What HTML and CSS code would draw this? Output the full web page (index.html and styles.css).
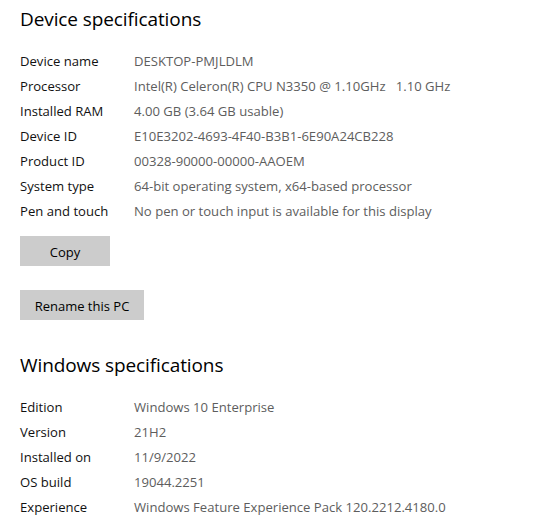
FILE: index.html
```html
<!DOCTYPE html>
<html>
<head>
<meta charset="utf-8">
<link rel="stylesheet" href="styles.css">
</head>
<body>
<div class="page">
  <section class="section">
    <h2 class="title title-device">Device specifications</h2>
    <div class="specs">
      <div class="label">Device name</div><div class="value">DESKTOP-PMJLDLM</div>
      <div class="label">Processor</div><div class="value">Intel(R) Celeron(R) CPU N3350 @ 1.10GHz&nbsp;&nbsp; 1.10 GHz</div>
      <div class="label">Installed RAM</div><div class="value">4.00 GB (3.64 GB usable)</div>
      <div class="label">Device ID</div><div class="value">E10E3202-4693-4F40-B3B1-6E90A24CB228</div>
      <div class="label">Product ID</div><div class="value">00328-90000-00000-AAOEM</div>
      <div class="label">System type</div><div class="value">64-bit operating system, x64-based processor</div>
      <div class="label">Pen and touch</div><div class="value">No pen or touch input is available for this display</div>
    </div>
    <div class="actions">
      <button class="btn btn-copy">Copy</button>
      <button class="btn btn-rename">Rename this PC</button>
    </div>
  </section>
  <section class="section section-win">
    <h2 class="title">Windows specifications</h2>
    <div class="specs specs-win">
      <div class="label">Edition</div><div class="value">Windows 10 Enterprise</div>
      <div class="label">Version</div><div class="value">21H2</div>
      <div class="label">Installed on</div><div class="value">11/9/2022</div>
      <div class="label">OS build</div><div class="value">19044.2251</div>
      <div class="label">Experience</div><div class="value">Windows Feature Experience Pack 120.2212.4180.0</div>
    </div>
  </section>
</div>
</body>
</html>
```
FILE: styles.css
```css
html, body {
  margin: 0;
  padding: 0;
  background: #ffffff;
}
.page {
  padding: 5px 0 0 20px;
  font-family: "Open Sans", "Noto Sans", sans-serif;
  color: #000;
}
.title {
  margin: 0 0 16px 0;
  font-size: 19px;
  font-weight: 400;
  line-height: 28px;
  letter-spacing: -0.1px;
  color: #000;
}
.title-device {
  margin-bottom: 15px;
}
.section-win {
  margin-top: 31px;
}
.specs {
  display: grid;
  grid-template-columns: 114px 1fr;
  grid-auto-rows: 25px;
  align-items: center;
  font-size: 13.1px;
}
.specs-win {
  grid-auto-rows: 24.8px;
}
.label {
  color: #111;
}
.value {
  color: #5d5d5d;
  white-space: nowrap;
}
.actions {
  display: flex;
  flex-direction: column;
  align-items: flex-start;
  gap: 24px;
  margin-top: 13px;
}
.btn {
  height: 30px;
  border: none;
  background: #cccccc;
  font-family: "Open Sans", "Noto Sans", sans-serif;
  font-size: 13px;
  color: #000;
  padding: 0 0 0 0;
  line-height: 30px;
}
.btn-copy {
  width: 90px;
  padding-top: 1px;
}
.btn-rename {
  width: 124px;
  padding-top: 1px;
}
```
